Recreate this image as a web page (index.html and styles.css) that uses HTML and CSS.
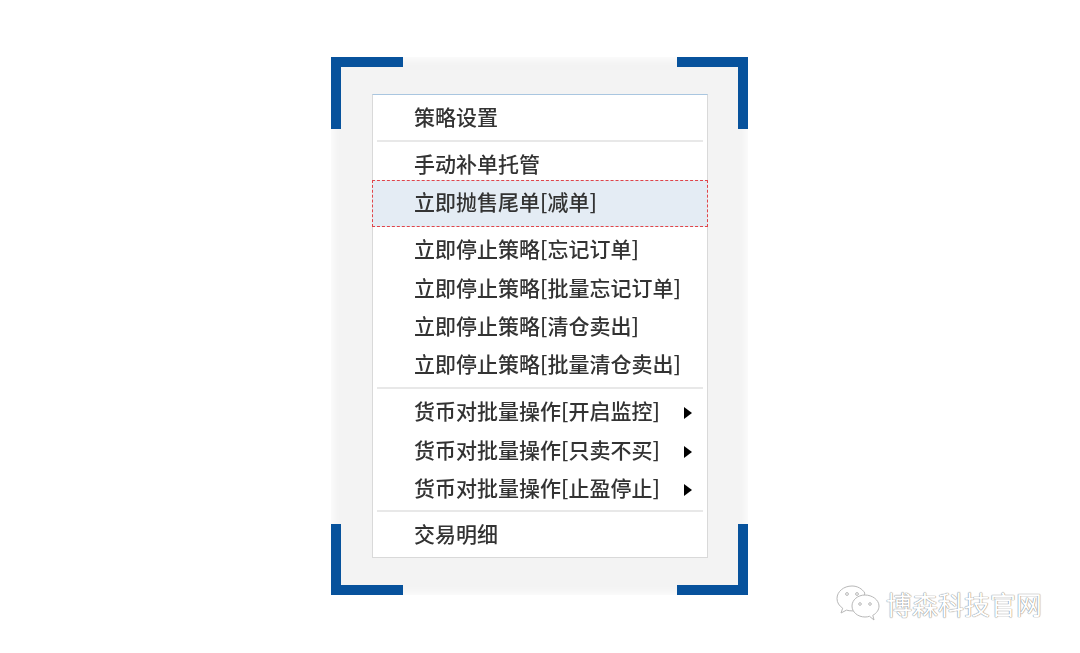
FILE: index.html
```html
<!DOCTYPE html>
<html lang="zh-CN">
<head>
<meta charset="UTF-8">
<meta name="viewport" content="width=device-width, initial-scale=1.0">
<title>策略菜单</title>
<link rel="stylesheet" href="styles.css">
</head>
<body>

<div class="frame">
  <span class="corner top-left"></span>
  <span class="corner top-right"></span>
  <span class="corner bottom-left"></span>
  <span class="corner bottom-right"></span>

  <div class="menu">
    <div class="item">策略设置</div>
    <div class="sep first"></div>
    <div class="item">手动补单托管</div>
    <div class="item current">立即抛售尾单[减单]</div>
    <div class="item">立即停止策略[忘记订单]</div>
    <div class="item">立即停止策略[批量忘记订单]</div>
    <div class="item">立即停止策略[清仓卖出]</div>
    <div class="item">立即停止策略[批量清仓卖出]</div>
    <div class="sep"></div>
    <div class="item">货币对批量操作[开启监控]<span class="arrow"></span></div>
    <div class="item">货币对批量操作[只卖不买]<span class="arrow"></span></div>
    <div class="item">货币对批量操作[止盈停止]<span class="arrow"></span></div>
    <div class="sep last"></div>
    <div class="item">交易明细</div>
  </div>
</div>

<div class="watermark">
  <svg class="wechat" width="44" height="38" viewBox="0 0 44 38" fill="#fff" stroke="#b8b8b8" stroke-width="1">
    <path d="M16 1C7.700 1 1 6.600 1 13.500c0 4 2.200 7.400 5.700 9.700L5 28l5.500-2.900c1.700.5 3.500.8 5.500.8.700 0 1.300 0 2-.1C22 25 28 13 28.800 8 26.200 3.800 21.500 1 16 1z"/>
    <path d="M29 10c-7.200 0-13 4.900-13 11s5.800 11 13 11c1.600 0 3.100-.2 4.500-.7L38 35l-1.200-4.700c3.800-2 6.200-5.400 6.200-9.300 0-6.100-6.800-11-14-11z"/>
    <circle cx="11" cy="9" r="1.400"/>
    <circle cx="21" cy="9" r="1.400"/>
    <circle cx="24" cy="19" r="1.300"/>
    <circle cx="34" cy="19" r="1.300"/>
  </svg>
  <span class="brand">博森科技官网</span>
</div>

</body>
</html>
```

FILE: styles.css
```css
body {
  margin: 0;
  height: 653px;
  overflow: hidden;
  background-color: #fff;
  font-family: "Noto Sans CJK SC", "Liberation Sans", sans-serif;
}

.frame {
  position: relative;
  box-sizing: border-box;
  width: 417px;
  height: 538px;
  margin: 57px 0 0 331px;
  padding: 37px 40px 0 41px;
  background-color: #f3f3f3;
  box-shadow: inset 0 0 8px 2px #fff;
}

.corner {
  position: absolute;
  width: 62px;
  height: 62px;
  border: 0 solid #07529c;
}

.top-left {
  top: 0;
  left: 0;
  border-width: 10px 0 0 10px;
}

.top-right {
  top: 0;
  right: 0;
  width: 61px;
  border-width: 10px 10px 0 0;
}

.bottom-left {
  bottom: 0;
  left: 0;
  height: 61px;
  border-width: 0 0 10px 10px;
}

.bottom-right {
  bottom: 0;
  right: 0;
  width: 61px;
  height: 61px;
  border-width: 0 10px 10px 0;
}

.menu {
  box-sizing: border-box;
  height: 464px;
  padding: 3px 0 0;
  background-color: #fff;
  border: 1px solid #d9d9d9;
  border-top-color: #a9c6e0;
}

.item {
  display: flex;
  align-items: center;
  box-sizing: border-box;
  height: 38.4px;
  padding: 0 15px 2px 41px;
  font-size: 21px;
  font-weight: 500;
  color: #333;
  white-space: nowrap;
  filter: blur(0.5px);
}

.item.current {
  height: 47px;
  margin: -2.3px -1px 2.5px;
  padding-bottom: 6px;
  background-color: #e4ecf4;
  border: 1px dashed #e0454a;
}

.arrow {
  margin: 6px 0 0 auto;
  border-left: 8px solid #000;
  border-top: 6px solid transparent;
  border-bottom: 6px solid transparent;
}

.sep {
  height: 2px;
  margin: 3px 4px 3.4px;
  background-color: #e8e8e8;
}

.sep.first {
  margin-top: 4px;
  margin-bottom: 2px;
}

.sep.last {
  margin-bottom: 2.4px;
}

.watermark {
  position: absolute;
  left: 836px;
  top: 585px;
  display: flex;
  align-items: center;
  gap: 6px;
}

.wechat {
  display: block;
}

.brand {
  font-size: 26px;
  line-height: 38px;
  color: #fff;
  white-space: nowrap;
  text-shadow: 0 0 1px #808080, 0 0 1px #808080;
}
```
